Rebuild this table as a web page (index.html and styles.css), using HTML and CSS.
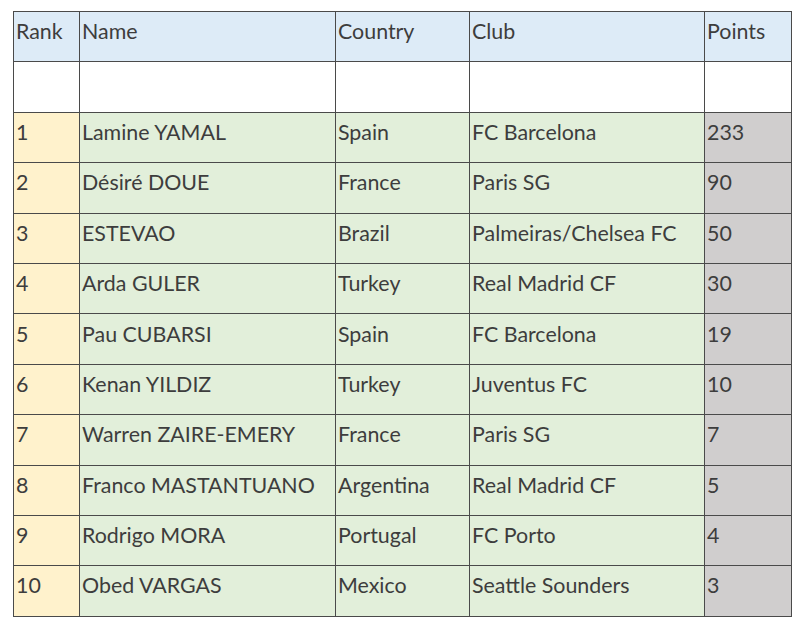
FILE: index.html
```html
<!DOCTYPE html>
<html>
<head>
<meta charset="utf-8">
<link rel="stylesheet" href="styles.css">
</head>
<body>
<table class="ranking">
  <colgroup>
    <col class="c-rank"><col class="c-name"><col class="c-country"><col class="c-club"><col class="c-points">
  </colgroup>
  <thead>
    <tr class="head"><td>Rank</td><td>Name</td><td>Country</td><td>Club</td><td>Points</td></tr>
  </thead>
  <tbody>
    <tr class="blank"><td></td><td></td><td></td><td></td><td></td></tr>
    <tr><td class="rank">1</td><td>Lamine YAMAL</td><td>Spain</td><td>FC Barcelona</td><td class="pts">233</td></tr>
    <tr><td class="rank">2</td><td>Désiré DOUE</td><td>France</td><td>Paris SG</td><td class="pts">90</td></tr>
    <tr><td class="rank">3</td><td>ESTEVAO</td><td>Brazil</td><td>Palmeiras/Chelsea FC</td><td class="pts">50</td></tr>
    <tr><td class="rank">4</td><td>Arda GULER</td><td>Turkey</td><td>Real Madrid CF</td><td class="pts">30</td></tr>
    <tr><td class="rank">5</td><td>Pau CUBARSI</td><td>Spain</td><td>FC Barcelona</td><td class="pts">19</td></tr>
    <tr><td class="rank">6</td><td>Kenan YILDIZ</td><td>Turkey</td><td>Juventus FC</td><td class="pts">10</td></tr>
    <tr><td class="rank">7</td><td>Warren ZAIRE-EMERY</td><td>France</td><td>Paris SG</td><td class="pts">7</td></tr>
    <tr><td class="rank">8</td><td>Franco MASTANTUANO</td><td>Argentina</td><td>Real Madrid CF</td><td class="pts">5</td></tr>
    <tr><td class="rank">9</td><td>Rodrigo MORA</td><td>Portugal</td><td>FC Porto</td><td class="pts">4</td></tr>
    <tr><td class="rank">10</td><td>Obed VARGAS</td><td>Mexico</td><td>Seattle Sounders</td><td class="pts">3</td></tr>
  </tbody>
</table>
</body>
</html>
```
FILE: styles.css
```css
html, body {
  margin: 0;
  padding: 0;
  background: #ffffff;
}
body {
  padding: 11px 0 0 13px;
}
.ranking {
  border-collapse: collapse;
  table-layout: fixed;
  width: 778px;
  font-family: Lato, "Open Sans", sans-serif;
  font-size: 21.4px;
  color: #3d3d3d;
}
.c-rank { width: 66px; }
.c-name { width: 256px; }
.c-country { width: 134px; }
.c-club { width: 235px; }
.c-points { width: 87px; }
.ranking td {
  border: 1px solid #4a4a4a;
  height: 49.4px;
  padding: 0 0 11px 2px;
  box-sizing: border-box;
  vertical-align: middle;
  white-space: nowrap;
  overflow: hidden;
  background: #e2efda;
}
.ranking tr { height: 50.4px; }
.ranking .head td { background: #ddebf7; }
.ranking .blank td { background: #ffffff; }
.ranking td.rank { background: #fff2cc; }
.ranking td.pts { background: #d0cece; }
```
